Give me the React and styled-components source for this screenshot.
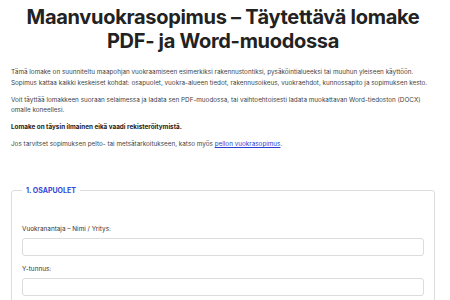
import styled, { createGlobalStyle } from 'styled-components';

const GlobalStyle = createGlobalStyle`
  body {
    margin: 0;
    background: #fff;
    font-family: Inter, "Noto Sans", sans-serif;
    color: #333;
  }
`;

const Page = styled.main`
  padding: 5px 15px 0 11px;
`;

const Title = styled.h1`
  margin: 0 0 14px;
  font-size: 20px;
  line-height: 24px;
  font-weight: 700;
  color: #222;
  text-align: center;
  letter-spacing: -0.3px;
`;

const Text = styled.p`
  margin: 0 0 6.5px;
  font-size: 6.35px;
  line-height: 10.5px;
  font-weight: ${(p) => (p.$bold ? 700 : 400)};
  color: ${(p) => (p.$bold ? '#222' : '#444')};
`;

const Link = styled.a`
  color: #2b3fd6;
  text-decoration: underline;
`;

const Section = styled.fieldset`
  margin: 36px 0 0;
  padding: 30px 10px 10px;
  border: 1px solid #dcdcdc;
  border-radius: 3px;
  display: flex;
  flex-direction: column;
  gap: 9px;
`;

const Legend = styled.legend`
  padding: 0 4px;
  font-size: 7px;
  font-weight: 700;
  color: #3447d8;
  text-transform: uppercase;
`;

const Field = styled.label`
  display: flex;
  flex-direction: column;
  gap: 4px;
  font-size: 6.4px;
  line-height: 9px;
  color: #333;
`;

const Input = styled.input`
  box-sizing: border-box;
  height: 18px;
  width: 100%;
  margin: 0;
  border: 1px solid #dcdcdc;
  border-radius: 3px;
  background: #fff;
  font: inherit;
`;

export default function App() {
  return (
    <>
      <GlobalStyle />
      <Page>
        <Title>
          Maanvuokrasopimus – Täytettävä lomake
          <br />
          PDF- ja Word-muodossa
        </Title>
        <Text>
          Tämä lomake on suunniteltu maapohjan vuokraamiseen esimerkiksi rakennustontiksi,
          pysäköintialueeksi tai muuhun yleiseen käyttöön. Sopimus kattaa kaikki keskeiset
          kohdat: osapuolet, vuokra-alueen tiedot, rakennusoikeus, vuokraehdot, kunnossapito ja
          sopimuksen kesto.
        </Text>
        <Text>
          Voit täyttää lomakkeen suoraan selaimessa ja ladata sen PDF-muodossa, tai
          vaihtoehtoisesti ladata muokattavan Word-tiedoston (DOCX) omalle koneellesi.
        </Text>
        <Text $bold>Lomake on täysin ilmainen eikä vaadi rekisteröitymistä.</Text>
        <Text>
          Jos tarvitset sopimuksen pelto- tai metsätarkoitukseen, katso myös{' '}
          <Link href="#">pellon vuokrasopimus</Link>.
        </Text>
        <Section>
          <Legend>1. Osapuolet</Legend>
          <Field>
            Vuokranantaja – Nimi / Yritys:
            <Input type="text" />
          </Field>
          <Field>
            Y-tunnus:
            <Input type="text" />
          </Field>
        </Section>
      </Page>
    </>
  );
}
